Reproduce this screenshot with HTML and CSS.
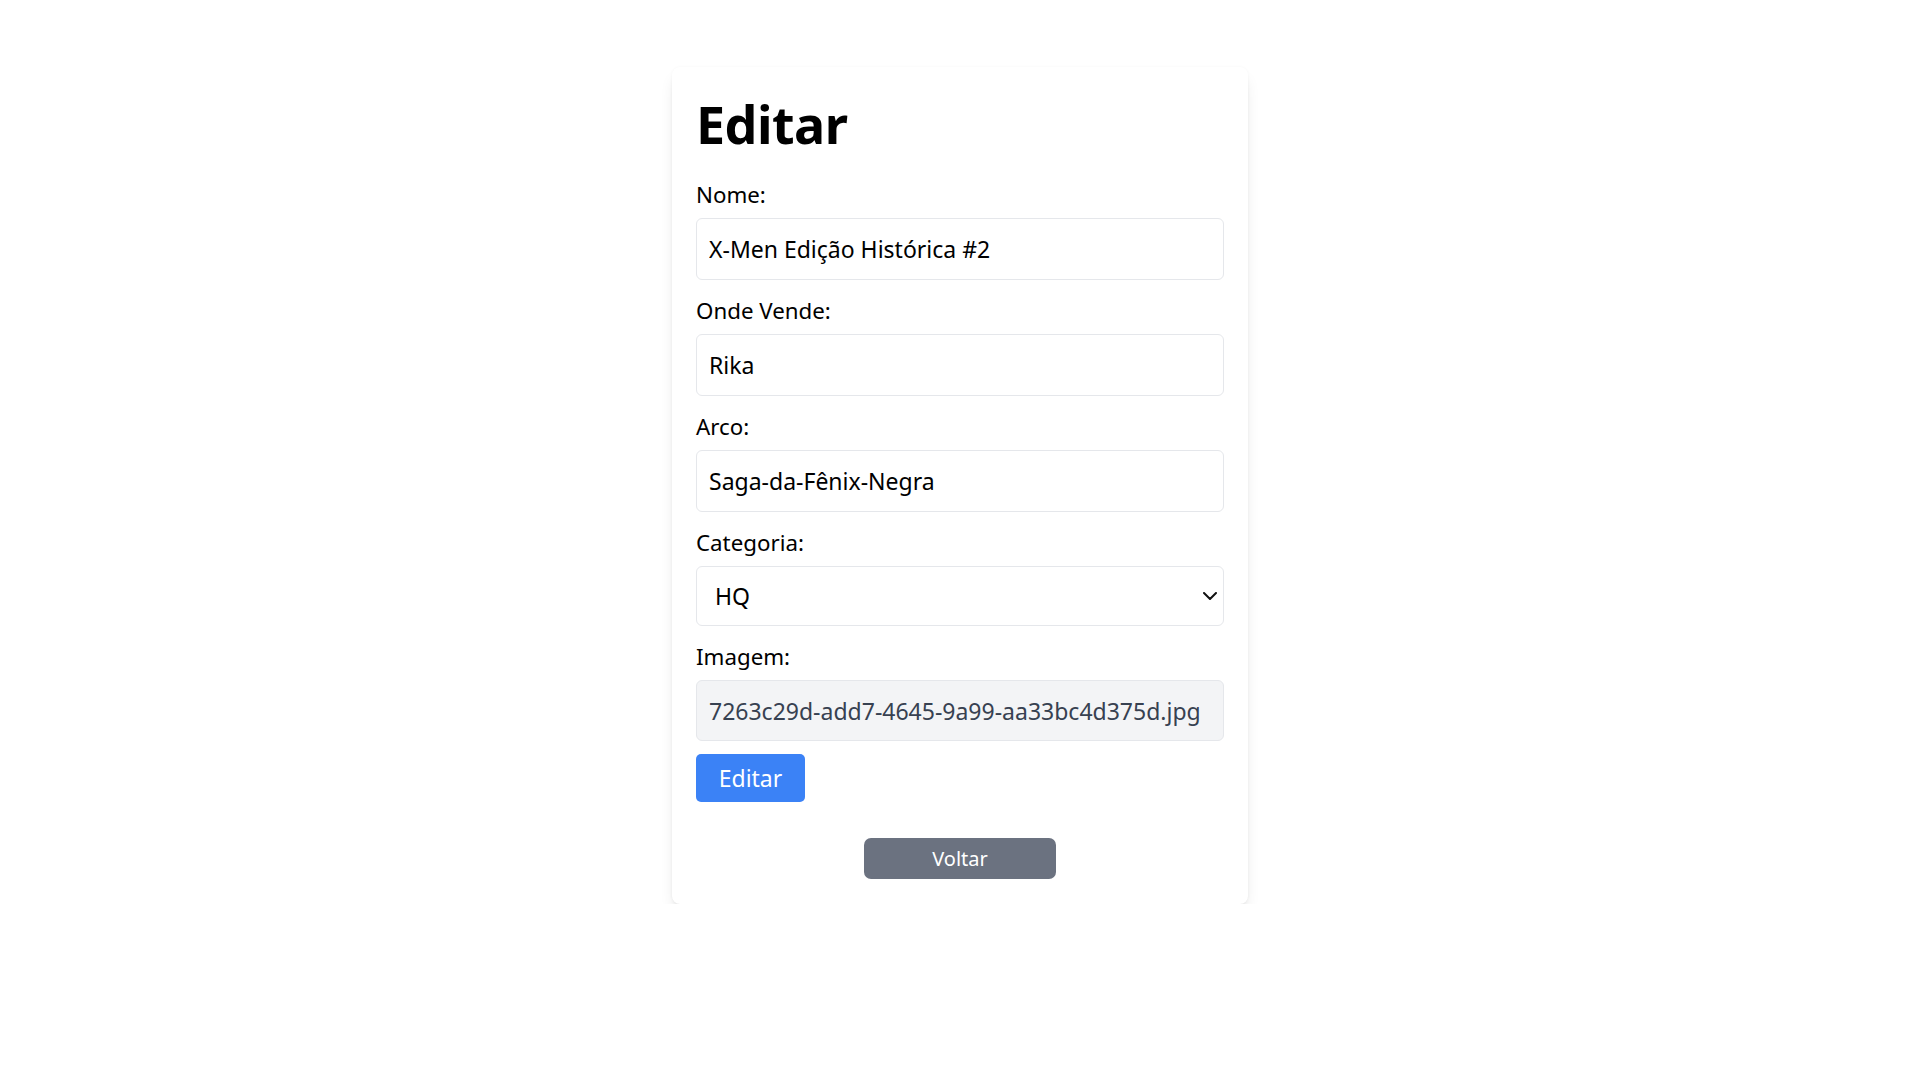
FILE: index.html
```html
<!DOCTYPE html>
<html lang="pt-BR">
<head>
<meta charset="utf-8">
<title>Editar</title>
<link rel="stylesheet" href="styles.css">
</head>
<body>
<main class="page">
  <section class="card">
    <h1 class="title">Editar</h1>
    <form class="form">
      <div class="field">
        <label class="label" for="nome">Nome:</label>
        <input class="input" id="nome" type="text" value="X-Men Edição Histórica #2">
      </div>
      <div class="field">
        <label class="label" for="onde">Onde Vende:</label>
        <input class="input" id="onde" type="text" value="Rika">
      </div>
      <div class="field">
        <label class="label" for="arco">Arco:</label>
        <input class="input" id="arco" type="text" value="Saga-da-Fênix-Negra">
      </div>
      <div class="field">
        <label class="label" for="cat">Categoria:</label>
        <div class="select-wrap">
          <select class="select" id="cat">
            <option>HQ</option>
          </select>
          <svg class="chevron" width="14" height="8" viewBox="0 0 14 8" aria-hidden="true"><path d="M1 1l6 6 6-6" fill="none" stroke="#111" stroke-width="2" stroke-linecap="round" stroke-linejoin="round"/></svg>
        </div>
      </div>
      <div class="field field-last">
        <label class="label" for="img">Imagem:</label>
        <input class="input input-readonly" id="img" type="text" value="7263c29d-add7-4645-9a99-aa33bc4d375d.jpg" readonly>
      </div>
      <button class="btn-primary" type="button">Editar</button>
    </form>
    <div class="back-row">
      <a class="btn-back" href="#">Voltar</a>
    </div>
  </section>
</main>
</body>
</html>
```
FILE: styles.css
```css
* { box-sizing: border-box; }
html, body { margin: 0; padding: 0; background: #ffffff; }
body {
  font-family: "Noto Sans", "Open Sans", sans-serif;
  color: #000;
}
.page {
  display: flex;
  justify-content: center;
  padding-top: 67px;
}
.card {
  width: 576px;
  padding: 24px 24px 25px;
  background: #fff;
  border-radius: 8px;
  box-shadow: 0 10px 15px -3px rgba(0,0,0,0.1), 0 4px 6px -4px rgba(0,0,0,0.1), 0 0 3px rgba(0,0,0,0.04);
}
.title {
  margin: 0 0 23px 0;
  font-size: 52px;
  line-height: 66px;
  font-weight: 700;
  letter-spacing: -0.5px;
}
.form { display: flex; flex-direction: column; }
.field { display: flex; flex-direction: column; margin-bottom: 16px; }
.field-last { margin-bottom: 13px; }
.label {
  font-size: 22.3px;
  line-height: 30px;
  margin-bottom: 8px;
}
.input, .select {
  width: 100%;
  height: 62px;
  border: 1px solid #e5e7eb;
  border-radius: 6px;
  padding: 0 12px;
  font-family: inherit;
  font-size: 23px;
  color: #000;
  background: #fff;
  outline: none;
}
.input-readonly { background: #f3f4f6; color: #374151; height: 61px; }
.select-wrap { position: relative; }
.select {
  appearance: none;
  -webkit-appearance: none;
  height: 60px;
  padding-left: 18px;
}
.chevron {
  position: absolute;
  right: 7px;
  top: 26px;
  pointer-events: none;
}
.btn-primary {
  align-self: flex-start;
  width: 109px;
  height: 48px;
  border: none;
  border-radius: 5px;
  background: #3b82f6;
  color: #fff;
  font-family: inherit;
  font-size: 23px;
  padding: 0;
}
.back-row { display: flex; justify-content: center; margin-top: 36px; }
.btn-back {
  display: flex;
  align-items: center;
  justify-content: center;
  width: 192px;
  height: 41px;
  border-radius: 7px;
  background: #6b7280;
  color: #fff;
  text-decoration: none;
  font-size: 20px;
}
```
